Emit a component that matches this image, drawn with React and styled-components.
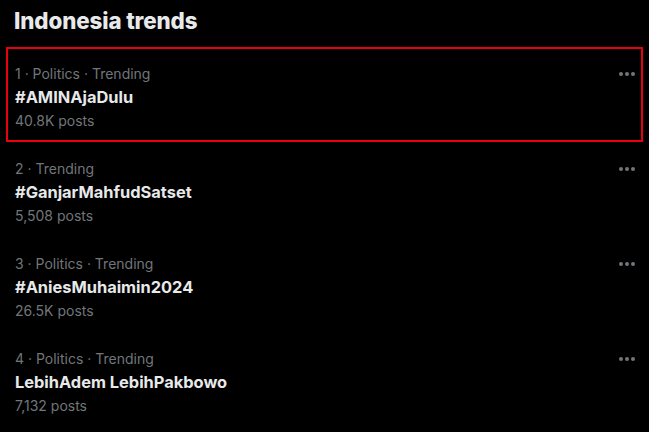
import React from "react";
import styled, { createGlobalStyle } from "styled-components";

const GlobalStyle = createGlobalStyle`
    html, body {
        margin: 0;
        background: #000;
    }
    body {
        font-family: Inter, "Noto Sans", "Liberation Sans", sans-serif;
        -webkit-font-smoothing: antialiased;
    }
`;

const Panel = styled.div`
    width: 649px;
    height: 432px;
    background: #000;
    overflow: hidden;
`;

const Heading = styled.h2`
    margin: 0;
    padding: 7px 14px 0 14px;
    height: 40px;
    font-size: 22.3px;
    line-height: 28px;
    font-weight: 800;
    color: #e7e9ea;
    letter-spacing: -0.1px;
`;

const List = styled.div`
    display: flex;
    flex-direction: column;
`;

const Item = styled.div`
    margin: 0 6px;
    padding: 16px 6px 12px 7px;
    height: 95px;
    box-sizing: border-box;
    border: 2px solid ${(p) => (p.$highlighted ? "#e8000b" : "transparent")};
    display: flex;
    justify-content: space-between;
    align-items: flex-start;
`;

const Texts = styled.div`
    display: flex;
    flex-direction: column;
`;

const Meta = styled.div`
    font-size: 14px;
    line-height: 18px;
    color: #71767b;
`;

const Topic = styled.div`
    margin-top: 4px;
    font-size: 16.4px;
    line-height: 21px;
    font-weight: 700;
    color: #e7e9ea;
`;

const Posts = styled.div`
    margin-top: 4px;
    font-size: 14px;
    line-height: 18px;
    color: #71767b;
`;

const MoreButton = styled.div`
    margin-top: 6px;
    width: 16px;
    height: 6px;
    display: flex;
    svg {
        display: block;
    }
`;

const trends = [
    { meta: "1 · Politics · Trending", topic: "#AMINAjaDulu", posts: "40.8K posts" },
    { meta: "2 · Trending", topic: "#GanjarMahfudSatset", posts: "5,508 posts" },
    { meta: "3 · Politics · Trending", topic: "#AniesMuhaimin2024", posts: "26.5K posts" },
    { meta: "4 · Politics · Trending", topic: "LebihAdem LebihPakbowo", posts: "7,132 posts" },
];

function Dots() {
    return (
        <svg width="16" height="6" viewBox="0 0 16 6">
            <circle cx="2" cy="3" r="2" fill="#71767b" />
            <circle cx="8" cy="3" r="2" fill="#71767b" />
            <circle cx="14" cy="3" r="2" fill="#71767b" />
        </svg>
    );
}

export default function App() {
    return (
        <Panel>
            <GlobalStyle />
            <Heading>Indonesia trends</Heading>
            <List>
                {trends.map((t, i) => (
                    <Item key={t.topic} $highlighted={i === 0}>
                        <Texts>
                            <Meta>{t.meta}</Meta>
                            <Topic>{t.topic}</Topic>
                            <Posts>{t.posts}</Posts>
                        </Texts>
                        <MoreButton>
                            <Dots />
                        </MoreButton>
                    </Item>
                ))}
            </List>
        </Panel>
    );
}
